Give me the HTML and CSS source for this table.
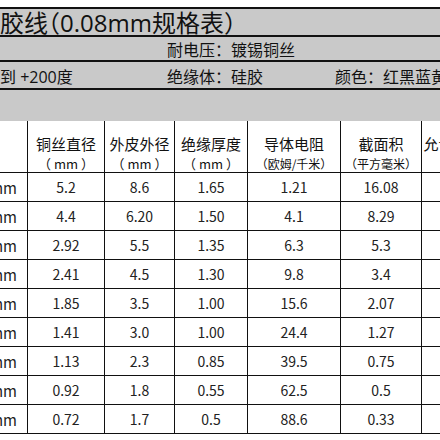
FILE: index.html
```html
<!DOCTYPE html>
<html lang="zh">
<head>
    <meta charset="UTF-8">
    <meta name="viewport" content="width=device-width, initial-scale=1.0">
    <title>硅胶线规格表</title>
    <link rel="stylesheet" href="styles.css">
</head>
<body>

    <div class="band">
        <div class="title">胶线（0.08mm规格表）</div>
        <div class="info">
            <span></span>
            <span>耐电压：镀锡铜丝</span>
            <span></span>
        </div>
        <div class="info tall">
            <span>到 +200度</span>
            <span>绝缘体：硅胶</span>
            <span>颜色：红黑蓝黄</span>
        </div>
        <div class="blank"></div>
    </div>

    <table class="spec">
        <colgroup>
            <col class="c-size">
            <col class="c-core">
            <col class="c-outer">
            <col class="c-wall">
            <col class="c-res">
            <col class="c-area">
            <col class="c-amp">
        </colgroup>
        <thead>
            <tr>
                <th>线规</th>
                <th>铜丝直径<small class="mm">（ mm ）</small></th>
                <th>外皮外径<small class="mm">（ mm ）</small></th>
                <th>绝缘厚度<small class="mm">（ mm ）</small></th>
                <th>导体电阻<small>（欧姆/千米）</small></th>
                <th>截面积<small>（平方毫米）</small></th>
                <th>允许电流<small>（A）</small></th>
            </tr>
        </thead>
        <tbody></tbody>
    </table>

    <script>
        const rows = [
            ['6AWG', '5.2', '8.6', '1.65', '1.21', '16.08'],
            ['8AWG', '4.4', '6.20', '1.50', '4.1', '8.29'],
            ['10AWG', '2.92', '5.5', '1.35', '6.3', '5.3'],
            ['12AWG', '2.41', '4.5', '1.30', '9.8', '3.4'],
            ['14AWG', '1.85', '3.5', '1.00', '15.6', '2.07'],
            ['16AWG', '1.41', '3.0', '1.00', '24.4', '1.27'],
            ['18AWG', '1.13', '2.3', '0.85', '39.5', '0.75'],
            ['20AWG', '0.92', '1.8', '0.55', '62.5', '0.5'],
            ['22AWG', '0.72', '1.7', '0.5', '88.6', '0.33']
        ]
        const body = document.querySelector('table.spec tbody')
        rows.forEach(r => {
            let tag = '<tr>'
            tag += `<td class="size">${r[0]} mm</td>`
            for (let i = 1; i < r.length; i++) tag += `<td>${r[i]}</td>`
            tag += '<td></td>'
            tag += '</tr>'
            body.innerHTML += tag
        })
    </script>

</body>
</html>
```

FILE: styles.css
```css
html, body {
    margin: 0;
    overflow: hidden;
    background: #fff;
}
body {
    width: 440px;
    padding-top: 7px;
    font-family: "Noto Sans CJK SC", "Noto Sans", sans-serif;
    color: #111;
}

/* top grey block */
.band {
    background: #c9c9c9;
    white-space: nowrap;
    font-family: "Open Sans", "Noto Sans CJK SC", sans-serif;
}
.title {
    border-top: 2px solid #111;
    border-bottom: 2px solid #111;
    height: 26px;
    line-height: 28px;
    font-size: 24px;
    font-feature-settings: "halt";
}
.info {
    display: grid;
    grid-template-columns: 167px 168px 1fr;
    height: 23px;
    line-height: 26px;
    font-size: 16px;
    border-bottom: 2px solid #111;
    overflow: hidden;
}
.info.tall {
    height: 26px;
    line-height: 31px;
}
.blank {
    height: 31px;
}

/* table */
.spec {
    margin-left: -73px;
    width: 558px;
    table-layout: fixed;
    border-collapse: collapse;
    background: #fff;
}
.c-size { width: 100px; }
.c-core { width: 77px; }
.c-outer { width: 70px; }
.c-wall { width: 73px; }
.c-res { width: 93px; }
.c-area { width: 81px; }
.c-amp { width: 64px; }

.spec th {
    height: 38px;
    padding: 12px 0 0;
    vertical-align: top;
    font-size: 15px;
    font-weight: normal;
    line-height: 22px;
    border: 1px solid #111;
    border-top: none;
    white-space: nowrap;
}
.spec th small {
    display: block;
    font-size: 12px;
    line-height: 17px;
}
.spec th small.mm {
    font-size: 13px;
}
.spec td {
    height: 28px;
    padding: 0;
    text-align: center;
    font-size: 14px;
    color: #222;
    border: 1px solid #111;
    white-space: nowrap;
}
.spec td.size {
    text-align: right;
    padding-right: 10px;
    font-size: 15px;
}
```
